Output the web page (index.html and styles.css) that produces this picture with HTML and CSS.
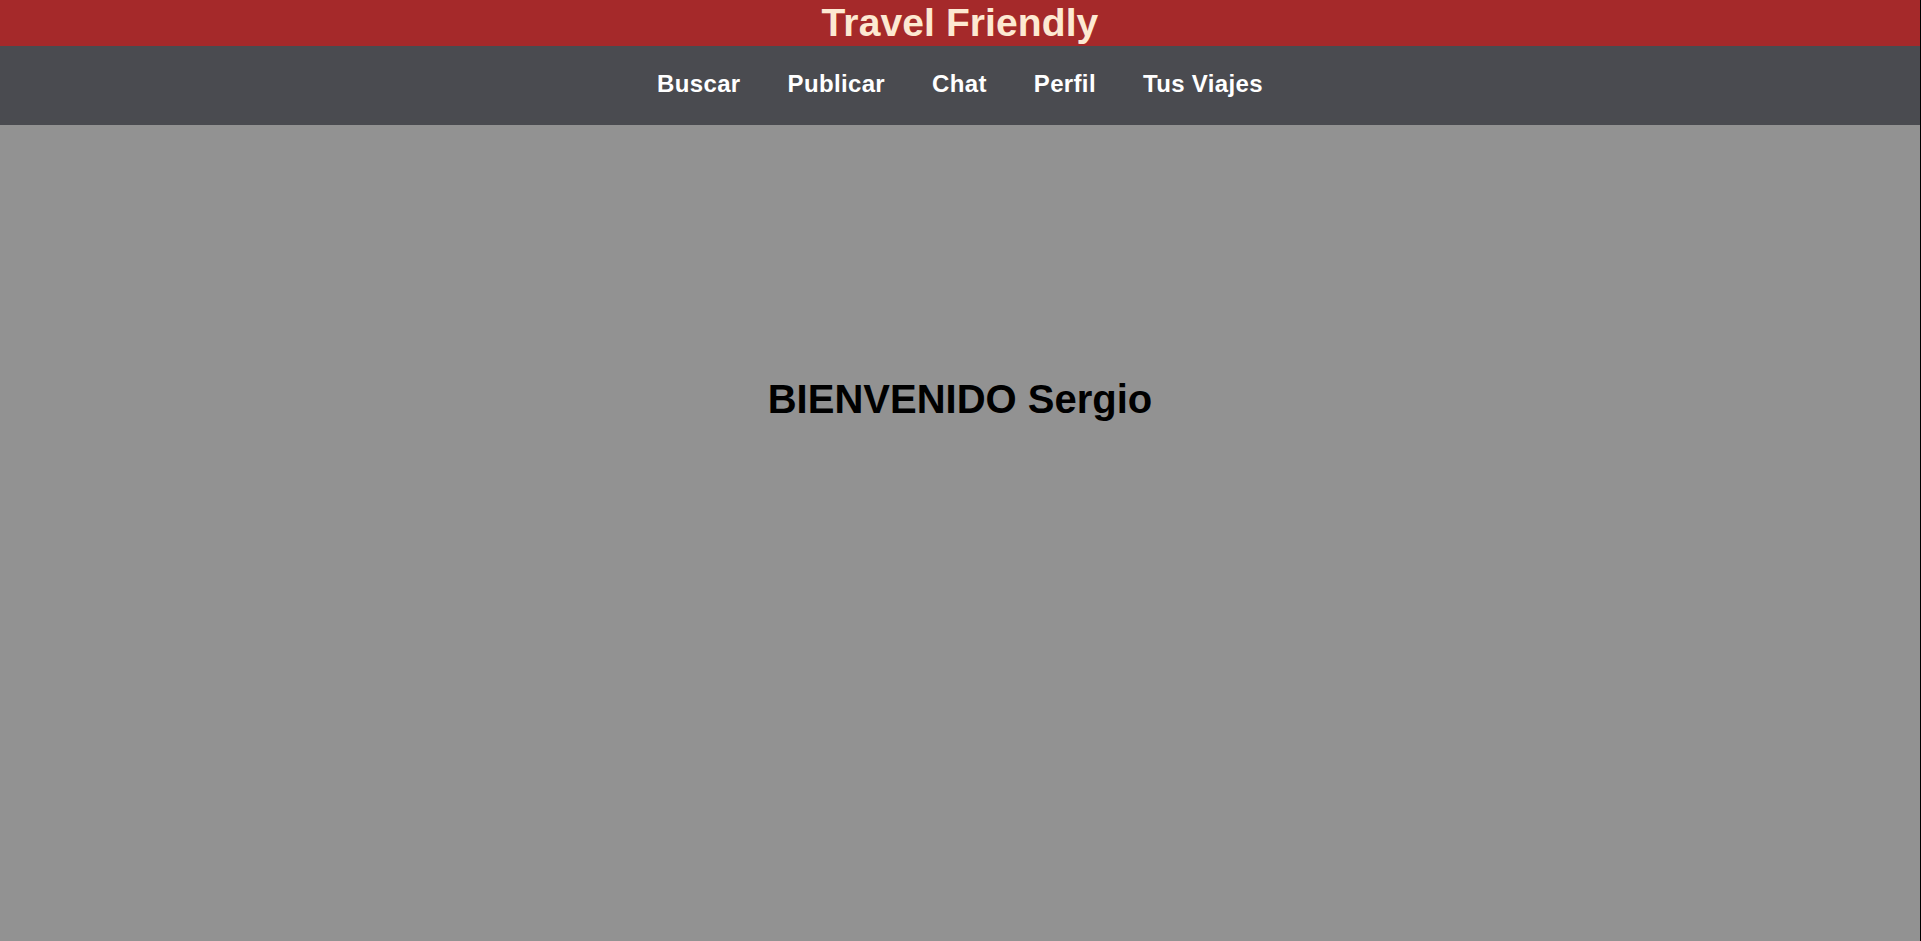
FILE: index.html
```html
<!DOCTYPE html>
<html lang="es">
<head>
<meta charset="utf-8">
<title>Travel Friendly</title>
<link rel="stylesheet" href="styles.css">
</head>
<body>
<div class="page">
  <header class="brand-bar">
    <h1 class="brand">Travel Friendly</h1>
  </header>
  <nav class="main-nav">
    <a class="nav-link" href="#">Buscar</a>
    <a class="nav-link" href="#">Publicar</a>
    <a class="nav-link" href="#">Chat</a>
    <a class="nav-link" href="#">Perfil</a>
    <a class="nav-link" href="#">Tus Viajes</a>
  </nav>
  <main class="content">
    <h2 class="welcome">BIENVENIDO Sergio</h2>
  </main>
</div>
</body>
</html>
```

FILE: styles.css
```css
html, body {
  margin: 0;
  padding: 0;
  height: 100%;
}

body {
  font-family: "Liberation Sans", Arial, sans-serif;
  background: #000;
}

.page {
  display: flex;
  flex-direction: column;
  min-height: 100vh;
  margin-right: 1px;
  background: #929292;
}

.brand-bar {
  background: #a5292a;
  height: 46px;
  display: flex;
  justify-content: center;
}

.brand {
  margin: 0;
  font-size: 39px;
  font-weight: bold;
  line-height: 45px;
  letter-spacing: 0.1px;
  color: #fde9d2;
}

.main-nav {
  background: #4a4b50;
  height: 79px;
  box-sizing: border-box;
  padding-top: 24px;
  display: flex;
  justify-content: center;
  align-items: flex-start;
  gap: 47px;
}

.nav-link {
  color: #ffffff;
  text-decoration: none;
  font-size: 24px;
  font-weight: bold;
  line-height: 28px;
  letter-spacing: 0.35px;
}

.content {
  flex: 1;
  display: flex;
  justify-content: center;
  align-items: flex-start;
  padding-top: 251px;
}

.welcome {
  margin: 0;
  font-size: 40px;
  font-weight: bold;
  line-height: 46px;
  color: #000;
}
```
